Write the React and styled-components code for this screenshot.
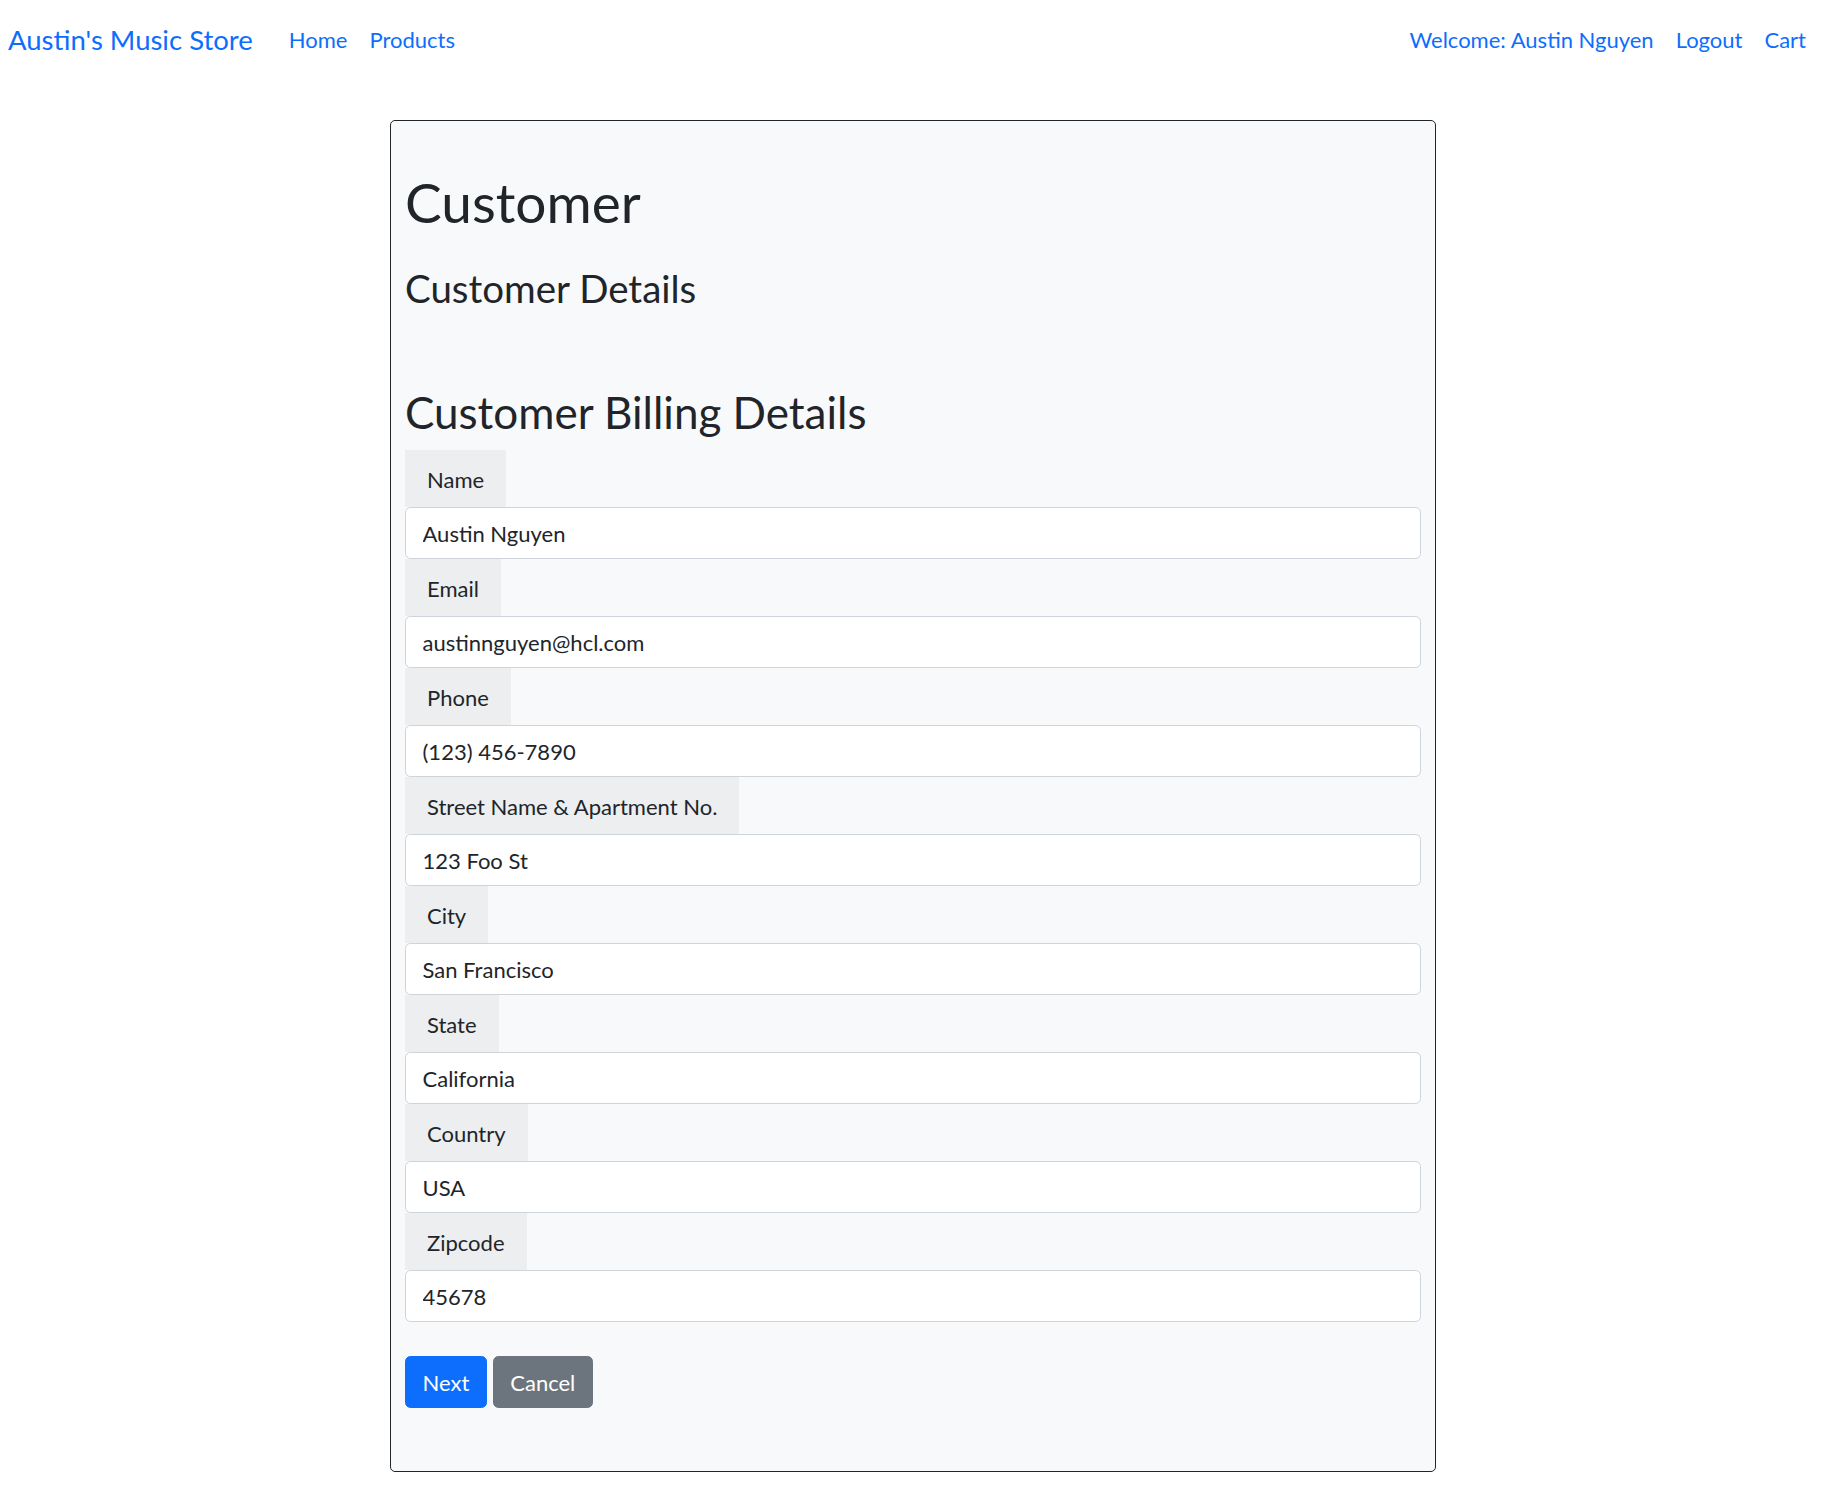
import React from "react";
import styled, { createGlobalStyle } from "styled-components";

const GlobalStyle = createGlobalStyle`
  body {
    margin: 0;
    background: #fff;
    color: #212529;
    font-family: Lato, "Open Sans", sans-serif;
  }
  * { box-sizing: border-box; }
`;

const Navbar = styled.nav`
  display: flex;
  align-items: center;
  padding: 19px 5px 0 8px;
`;

const Brand = styled.a`
  font-size: 27.5px;
  line-height: 1.5;
  color: #0d6efd;
  text-decoration: none;
  margin-right: 25px;
`;

const NavGroup = styled.div`
  display: flex;
  align-items: center;
  margin-left: ${(p) => (p.$right ? "auto" : "0")};
`;

const NavLink = styled.a`
  font-size: 22px;
  line-height: 1.5;
  color: #0d6efd;
  text-decoration: none;
  padding: 0 11px;
`;

const Main = styled.main`
  padding-left: 4px;
`;

const Card = styled.div`
  width: 1046px;
  margin: 60px auto 16px;
  background: #f8f9fa;
  border: 1px solid #212529;
  border-radius: 5px;
  padding: 14px 14px 63px;
`;

const Title = styled.h1`
  font-size: 55px;
  font-weight: 400;
  line-height: 1.2;
  margin: 34px 0 0;
`;

const SubTitle = styled.h3`
  font-size: 38.5px;
  font-weight: 400;
  line-height: 1.2;
  margin: 30px 0 0;
`;

const SectionTitle = styled.h2`
  font-size: 44px;
  font-weight: 400;
  line-height: 1.2;
  margin: 75px 0 11px;
`;

const Field = styled.div`
  display: flex;
  flex-direction: column;
  align-items: flex-start;
`;

const FieldLabel = styled.label`
  display: inline-block;
  background: #eceef0;
  font-size: 22px;
  line-height: 33px;
  padding: 13px 22px 11px;
`;

const TextInput = styled.input`
  width: 100%;
  height: 52px;
  font-family: Lato, "Open Sans", sans-serif;
  font-size: 22px;
  line-height: 33px;
  color: #212529;
  background: #fff;
  border: 1px solid #ced4da;
  border-radius: 5.5px;
  padding: 0 16.5px;
  outline: none;
`;

const ButtonRow = styled.div`
  display: flex;
  gap: 6px;
  margin-top: 34px;
`;

const Button = styled.button`
  font-family: Lato, "Open Sans", sans-serif;
  font-size: 22px;
  line-height: 33px;
  color: #fff;
  background: ${(p) => (p.$variant === "secondary" ? "#6c757d" : "#0d6efd")};
  border: 1px solid ${(p) => (p.$variant === "secondary" ? "#6c757d" : "#0d6efd")};
  border-radius: 5.5px;
  padding: 8.5px 16.5px;
  cursor: pointer;
`;

const fields = [
  { label: "Name", value: "Austin Nguyen" },
  { label: "Email", value: "austinnguyen@hcl.com" },
  { label: "Phone", value: "(123) 456-7890" },
  { label: "Street Name & Apartment No.", value: "123 Foo St" },
  { label: "City", value: "San Francisco" },
  { label: "State", value: "California" },
  { label: "Country", value: "USA" },
  { label: "Zipcode", value: "45678" },
];

const App = () => {
  return (
    <>
      <GlobalStyle />
      <Navbar>
        <Brand href="#">Austin's Music Store</Brand>
        <NavGroup>
          <NavLink href="#">Home</NavLink>
          <NavLink href="#">Products</NavLink>
        </NavGroup>
        <NavGroup $right>
          <NavLink href="#">Welcome: Austin Nguyen</NavLink>
          <NavLink href="#">Logout</NavLink>
          <NavLink href="#">Cart</NavLink>
        </NavGroup>
      </Navbar>
      <Main>
        <Card>
          <Title>Customer</Title>
          <SubTitle>Customer Details</SubTitle>
          <SectionTitle>Customer Billing Details</SectionTitle>
          {fields.map((f) => (
            <Field key={f.label}>
              <FieldLabel>{f.label}</FieldLabel>
              <TextInput value={f.value} readOnly />
            </Field>
          ))}
          <ButtonRow>
            <Button>Next</Button>
            <Button $variant="secondary">Cancel</Button>
          </ButtonRow>
        </Card>
      </Main>
    </>
  );
};

export default App;
